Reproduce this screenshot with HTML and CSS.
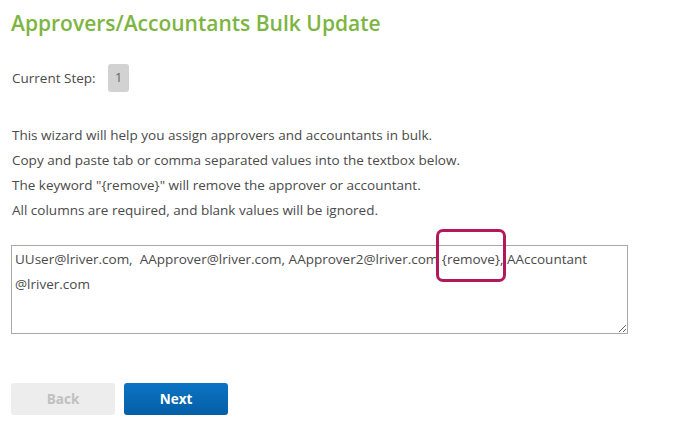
FILE: index.html
```html
<!DOCTYPE html>
<html lang="en">
<head>
    <meta charset="UTF-8">
    <title>Approvers/Accountants Bulk Update</title>
    <link rel="stylesheet" href="styles.css">
</head>
<body>
    <div class="wizard">
        <h1 class="title">Approvers/Accountants Bulk Update</h1>

        <div class="step">
            <span class="step-label">Current Step:</span>
            <span class="step-badge">1</span>
        </div>

        <div class="intro">
            <p>This wizard will help you assign approvers and accountants in bulk.</p>
            <p>Copy and paste tab or comma separated values into the textbox below.</p>
            <p>The keyword "{remove}" will remove the approver or accountant.</p>
            <p>All columns are required, and blank values will be ignored.</p>
        </div>

        <div class="input-wrap">
            <textarea class="bulk-input">UUser@lriver.com,  AApprover@lriver.com, AApprover2@lriver.com {remove}, AAccountant
@lriver.com</textarea>
            <div class="highlight"></div>
        </div>

        <div class="actions">
            <button class="btn btn-back" disabled>Back</button>
            <button class="btn btn-next">Next</button>
        </div>
    </div>
</body>
</html>
```

FILE: styles.css
```css
body {
    margin: 0;
    background: #fff;
    font-family: 'Open Sans', sans-serif;
    color: #4a4a4a;
}
.wizard {
    padding: 8px 11px;
}
.title {
    margin: 0;
    font-size: 21px;
    font-weight: 600;
    color: #7db542;
    line-height: 31px;
}
.step {
    display: flex;
    align-items: center;
    margin-top: 25px;
    font-size: 13.5px;
}
.step-label {
    padding-left: 1px;
    width: 96px;
}
.step-badge {
    width: 21px;
    height: 28px;
    line-height: 26px;
    text-align: center;
    background: #d2d2d2;
    border-radius: 3px;
    color: #666;
}
.intro {
    margin-top: 31px;
    font-size: 13.5px;
    padding-left: 1px;
}
.intro p {
    margin: 0;
    line-height: 25px;
}
.input-wrap {
    position: relative;
    margin-top: 22px;
    width: 617px;
}
.bulk-input {
    display: block;
    box-sizing: border-box;
    width: 617px;
    height: 89px;
    margin: 0;
    padding: 1px 3px;
    border: 1px solid #a9a9a9;
    font-family: 'Open Sans', sans-serif;
    font-size: 13.5px;
    line-height: 25px;
    color: #4a4a4a;
    resize: both;
    overflow: hidden;
}
.highlight {
    position: absolute;
    left: 425px;
    top: -16px;
    width: 64px;
    height: 47px;
    border: 3px solid #b3185a;
    border-radius: 7px;
}
.actions {
    display: flex;
    gap: 9px;
    margin-top: 49px;
}
.btn {
    width: 104px;
    height: 32px;
    border: none;
    border-radius: 3px;
    font-family: 'Open Sans', sans-serif;
    font-size: 13.5px;
    font-weight: 700;
}
.btn-back {
    background: #ededed;
    color: #c0c0c0;
}
.btn-next {
    background: linear-gradient(#0b74c4, #055ea6);
    color: #fff;
}
```
